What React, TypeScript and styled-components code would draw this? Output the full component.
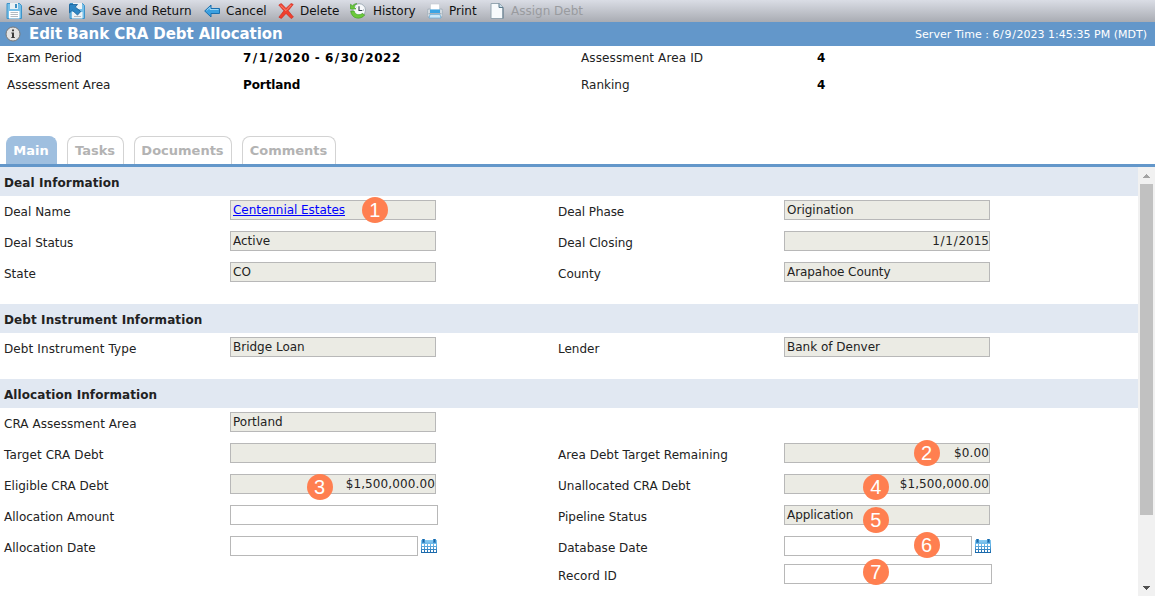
import React from "react";
import styled, { createGlobalStyle, css } from "styled-components";

const GlobalStyle = createGlobalStyle`
  html, body { margin: 0; padding: 0; background: #fff; overflow: hidden; }
  * { box-sizing: border-box; }
  body { font-family: "DejaVu Sans", Verdana, sans-serif; font-size: 12px; color: #222; }
`;

const Page = styled.div`
  display: flex;
  flex-direction: column;
  width: 1155px;
  height: 596px;
  overflow: hidden;
`;

const Toolbar = styled.div`
  display: flex;
  flex: 0 0 22px;
  background: linear-gradient(#dadde5, #a9acb3);
`;

const ToolButton = styled.div<{ $width: number; $gap?: number; $disabled?: boolean }>`
  display: flex;
  align-items: center;
  gap: ${(p) => p.$gap ?? 6}px;
  flex: 0 0 ${(p) => p.$width}px;
  height: 21px;
  padding-left: 6px;
  color: ${(p) => (p.$disabled ? "#999b9f" : "#111")};
  white-space: nowrap;
  svg { flex: 0 0 16px; }
`;

const Text = styled.span<{ $ls?: number }>`
  display: inline-block;
  white-space: nowrap;
  letter-spacing: ${(p) => p.$ls ?? 0}px;
`;

const Slash = styled.span<{ $pad: number }>`
  padding: 0 ${(p) => p.$pad}em;
`;

const TitleBar = styled.div`
  display: flex;
  align-items: center;
  flex: 0 0 24px;
  height: 24px;
  padding: 0 8px 0 5px;
  background: #6397ca;
  color: #fff;
`;

const Title = styled.h1`
  flex: 1;
  margin: 0 0 0 8px;
  padding-top: 1px;
  font-size: 15px;
  line-height: 23px;
`;

const ServerTime = styled.div`
  font-size: 11px;
  white-space: nowrap;
`;

const Summary = styled.div`
  display: grid;
  grid-template-columns: 236px 338px 236px 1fr;
  grid-auto-rows: 27px;
  flex: 0 0 90px;
  padding-left: 7px;
  line-height: 24px;
`;

const SummaryValue = styled.div`
  font-weight: bold;
  color: #000;
`;

const Tabs = styled.div`
  display: flex;
  gap: 10px;
  flex: 0 0 31px;
  padding-left: 6px;
  border-bottom: 3px solid #6397ca;
`;

const Tab = styled.div<{ $width: number; $active?: boolean }>`
  width: ${(p) => p.$width}px;
  height: 28px;
  padding-right: 1px;
  border: 1px solid #d3d3d3;
  border-bottom: 0;
  border-radius: 8px 8px 0 0;
  font-size: 13px;
  font-weight: bold;
  line-height: 27px;
  text-align: center;
  color: #b3b3b3;
  white-space: nowrap;
  ${(p) => p.$active && css`
    background: #9fbfdf;
    border-color: #9fbfdf;
    color: #fff;
  `}
`;

const Body = styled.div`
  display: flex;
  flex: 1;
  min-height: 0;
`;

const Form = styled.div`
  flex: 1;
  min-width: 0;
`;

const Section = styled.section`
  margin-bottom: 15px;
`;

const SectionTitle = styled.h2`
  height: 29px;
  margin: 0;
  padding: 1px 0 0 4px;
  background: #e1e8f2;
  font-size: 12px;
  line-height: 31px;
`;

const Row = styled.div<{ $height?: number }>`
  display: grid;
  grid-template-columns: 226px 328px 226px 1fr;
  height: ${(p) => p.$height ?? 31}px;
  padding: 4px 0 0 4px;
`;

const Label = styled.div`
  padding-top: 1px;
  line-height: 23px;
`;

const FieldCell = styled.div`
  display: flex;
  align-items: flex-start;
  position: relative;
  gap: 3px;
`;

const Input = styled.div<{ $width?: number; $editable?: boolean; $right?: boolean }>`
  width: ${(p) => p.$width ?? 206}px;
  height: 20px;
  padding: 0 ${(p) => (p.$right ? 0 : 2)}px 0 2px;
  border: 1px solid #b8b8b8;
  background: ${(p) => (p.$editable ? "#fff" : "#ebebe4")};
  line-height: 18px;
  text-align: ${(p) => (p.$right ? "right" : "left")};
`;

const Link = styled.a`
  color: #0000ff;
  text-decoration: underline;
`;

const Badge = styled.span<{ $x: number; $y: number }>`
  position: absolute;
  left: ${(p) => p.$x}px;
  top: ${(p) => p.$y}px;
  width: 26px;
  height: 26px;
  border-radius: 50%;
  background: #ff7f50;
  color: #fff;
  font: 20px/26px "Liberation Sans", Arial, sans-serif;
  text-align: center;
`;

const CalendarButton = styled.span`
  display: flex;
  padding-top: 3px;
`;

const ScrollTrack = styled.div`
  display: flex;
  flex-direction: column;
  justify-content: space-between;
  align-items: center;
  flex: 0 0 17px;
  padding: 7px 0 6px;
  background: #f1f1f1;
`;

const ScrollThumb = styled.div`
  width: 13px;
  height: 331px;
  margin: 6px 0 auto;
  background: #c1c1c1;
`;

const SaveIcon = () => (
  <svg width="16" height="16" viewBox="0 0 16 16">
    <path d="M1 .5h12.5l2 2v13H1z" fill="#76bfe8" stroke="#3d93c9" />
    <path d="M4 0h8v6H4z" fill="#e9f0f4" />
    <path d="M9 1h2v4H9z" fill="#3f8fc2" />
    <path d="M3 8h10.5v7.5H3z" fill="#fff" />
    <path d="M4.5 9.5h7.5M4.5 11.5h7.5M4.5 13.5h7.5" stroke="#b3bac0" />
  </svg>
);

const SaveReturnIcon = () => (
  <svg width="16" height="16" viewBox="0 0 16 16">
    <path d="M1 .5h12.5l2 2v13H1z" fill="#76bfe8" stroke="#3d93c9" />
    <path d="M4 0h9v6H4zM3 9h10.5v6.5H3z" fill="#edf3f6" />
    <path d="M5 13.5h7" stroke="#b3bac0" />
    <path d="M.5 1.5h8L6.3 4l5.4 4.5-3.2 3.6L3.3 7.2.5 9.8z" fill="#2e86c4" stroke="#175e96" strokeWidth=".8" />
  </svg>
);

const BackIcon = () => (
  <svg width="16" height="16" viewBox="0 0 16 16">
    <path d="M.7 8L7 2v3.5h8.5v5H7V14z" fill="#3ba0e0" stroke="#1b6fae" strokeLinejoin="round" />
    <path d="M2.6 7.5L6 4.3v2.2h8.5" fill="none" stroke="#9cd7f6" />
  </svg>
);

const DeleteIcon = () => (
  <svg width="16" height="16" viewBox="0 0 16 16">
    <path d="M.8 2L3.3.6 8 5.4 13.2.4l2 1.1-5 6.2 5.2 6.3-2.2 1.6L8 10.4l-4.6 5-2.5-1.2 5-6.4z" fill="#f0402e" stroke="#cf2d22" strokeWidth=".7" />
    <path d="M2.5 2.2L8 7.6 13.3 2" fill="none" stroke="#ff8d77" />
  </svg>
);

const HistoryIcon = () => (
  <svg width="16" height="16" viewBox="0 0 16 16">
    <circle cx="9.2" cy="7" r="6.3" fill="#f7f9fb" stroke="#9aa7b2" strokeWidth=".9" />
    <path d="M9 3.2v4.3h3.3" fill="none" stroke="#33424f" strokeWidth="1.1" />
    <path d="M9 11.2v1M14 7h-1M5.5 3.7l.6.6M12.3 10.3l.7.7" stroke="#77838d" strokeWidth=".8" />
    <path d="M.5 1.2l2 1.5C4 1 5.5.6 7 .7 4.500 1.800 4.200 3 4.200 4.200L6 6H.5zM.7 8h3.500c.5 3.500 5 5 8 2.500l2.600 1.400c-4 5.500-13.500 4-14.100-3.900z" fill="#6cc93b" stroke="#3b9a24" strokeWidth=".6" />
  </svg>
);

const PrintIcon = () => (
  <svg width="16" height="16" viewBox="0 0 16 16">
    <rect x=".4" y="6" width="15.200" height="8" rx="1.5" fill="#d2dae0" stroke="#9ba8b3" strokeWidth=".7" />
    <path d="M3.500 1h9v6h-9z" fill="#fff" stroke="#c5cbd0" strokeWidth=".6" />
    <path d="M3 6.500h10v3.500H3z" fill="#3aa4e4" />
    <path d="M1.500 10.700h13" stroke="#8f9ca7" strokeWidth=".8" />
    <path d="M3 11.500h10l1 3.500H2z" fill="#cce9f9" stroke="#62abd8" strokeWidth=".7" />
  </svg>
);

const PageIcon = () => (
  <svg width="16" height="16" viewBox="0 0 16 16">
    <path d="M2 .5h8.500l3.500 3.500v11.500H2z" fill="#f7fafc" stroke="#94a5b0" />
    <path d="M10 .5v4h4" fill="#c4d9e6" stroke="#5d7b8c" />
    <path d="M14 4.500v11" stroke="#60798a" />
  </svg>
);

const InfoIcon = () => (
  <svg width="16" height="16" viewBox="0 0 16 16">
    <circle cx="8" cy="8" r="7" fill="#e2e2e2" stroke="#777" strokeWidth="1" />
    <path d="M7 3.500h2v1.700H7zM6.300 6.500H9V11h.8v1H6.300v-1H7V7.500h-.7z" fill="#3a3a3a" />
  </svg>
);

const CalendarIcon = () => (
  <svg width="16" height="15" viewBox="0 0 16 15" shapeRendering="crispEdges">
    <defs>
      <linearGradient id="calendarFill" x1="0" y1="0" x2="0" y2="1">
        <stop offset="0" stopColor="#8acbf1" />
        <stop offset=".4" stopColor="#64b3e6" />
        <stop offset="1" stopColor="#1765a8" />
      </linearGradient>
    </defs>
    <path d="M0 1h16v13H0z" fill="url(#calendarFill)" />
    <path d="M1 0h3v4H1zM12 0h3v4h-3z" fill="#3c8cc8" />
    <path d="M2 0h1v3H2zM13 0h1v3h-1z" fill="#1b68a8" />
    <path d="M1 5h2v2H1zm3 0h2v2H4zm3 0h2v2H7zm3 0h2v2h-2zm3 0h2v2h-2zM1 8h2v2H1zm3 0h2v2H4zm3 0h2v2H7zm3 0h2v2h-2zm3 0h2v2h-2zM1 11h2v2H1zm3 0h2v2H4zm3 0h2v2H7zm3 0h2v2h-2zm3 0h2v2h-2z" fill="#fff" />
  </svg>
);

const Arrow = ({ down }: { down?: boolean }) => (
  <svg width="7" height="4" viewBox="0 0 7 4" shapeRendering="crispEdges">
    {down ? <path d="M0 0h7v1H6v1H5v1H4v1H3V3H2V2H1V1H0z" fill="#505050" /> : <path d="M3 0h1v1h1v1h1v1h1v1H0V3h1V2h1V1h1z" fill="#a3a3a3" />}
  </svg>
);

// Dates are set with a little air round each slash.
const DateText = ({ value, pad = 0.06, ls }: { value: string; pad?: number; ls?: number }) => (
  <Text $ls={ls}>
    {value.split("/").map((part, i) => (
      <React.Fragment key={i}>
        {i > 0 && <Slash $pad={pad}>/</Slash>}
        {part}
      </React.Fragment>
    ))}
  </Text>
);

type Tool = { label: string; width: number; icon: React.ReactNode; gap?: number; disabled?: boolean };
const tools: Tool[] = [
  { label: "Save", width: 63, icon: <SaveIcon /> },
  { label: "Save and Return", width: 135, icon: <SaveReturnIcon />, gap: 7 },
  { label: "Cancel", width: 74, icon: <BackIcon /> },
  { label: "Delete", width: 72, icon: <DeleteIcon /> },
  { label: "History", width: 77, icon: <HistoryIcon />, gap: 7 },
  { label: "Print", width: 62, icon: <PrintIcon /> },
  { label: "Assign Debt", width: 110, icon: <PageIcon />, disabled: true },
];

type FieldProps = {
  label: string;
  ls?: number;
  value?: React.ReactNode;
  valueLs?: number;
  editable?: boolean;
  right?: boolean;
  date?: boolean;
  badge?: [number, number, number];
};

const Field = ({ label, ls, value, valueLs, editable, right, date, badge }: FieldProps) => (
  <>
    <Label><Text $ls={ls}>{label}</Text></Label>
    <FieldCell>
      <Input $editable={editable || date} $right={right} $width={date ? 188 : editable ? 208 : 206}>
        {value && <Text $ls={valueLs}>{value}</Text>}
      </Input>
      {date && <CalendarButton><CalendarIcon /></CalendarButton>}
      {badge && <Badge $x={badge[1]} $y={badge[2]}>{badge[0]}</Badge>}
    </FieldCell>
  </>
);

const Blank = () => (
  <>
    <span />
    <span />
  </>
);

export default function App() {
  return (
    <Page>
      <GlobalStyle />
      <Toolbar>
        {tools.map((t) => (
          <ToolButton key={t.label} $width={t.width} $gap={t.gap} $disabled={t.disabled}>
            {t.icon}
            <Text>{t.label}</Text>
          </ToolButton>
        ))}
      </Toolbar>
      <TitleBar>
        <InfoIcon />
        <Title><Text $ls={-0.07}>Edit Bank CRA Debt Allocation</Text></Title>
        <ServerTime><DateText value="Server Time : 6/9/2023 1:45:35 PM (MDT)" ls={0.01} /></ServerTime>
      </TitleBar>
      <Summary>
        <Text>Exam Period</Text>
        <SummaryValue><DateText value="7/1/2020 - 6/30/2022" pad={0.08} ls={0.54} /></SummaryValue>
        <Text $ls={0.12}>Assessment Area ID</Text>
        <SummaryValue>4</SummaryValue>
        <Text>Assessment Area</Text>
        <SummaryValue><Text $ls={-0.1}>Portland</Text></SummaryValue>
        <Text>Ranking</Text>
        <SummaryValue>4</SummaryValue>
      </Summary>
      <Tabs>
        <Tab $width={51} $active>Main</Tab>
        <Tab $width={57}>Tasks</Tab>
        <Tab $width={98}>Documents</Tab>
        <Tab $width={94}>Comments</Tab>
      </Tabs>
      <Body>
        <Form>
          <Section>
            <SectionTitle><Text $ls={0.1}>Deal Information</Text></SectionTitle>
            <Row>
              <Field label="Deal Name" value={<Link>Centennial Estates</Link>} valueLs={-0.04} badge={[1, 131.7, -2.6]} />
              <Field label="Deal Phase" value="Origination" ls={-0.08} />
            </Row>
            <Row>
              <Field label="Deal Status" value="Active" />
              <Field label="Deal Closing" value={<DateText value="1/1/2015" />} right />
            </Row>
            <Row>
              <Field label="State" value="CO" />
              <Field label="County" value="Arapahoe County" valueLs={-0.06} />
            </Row>
          </Section>
          <Section>
            <SectionTitle><Text $ls={0.1}>Debt Instrument Information</Text></SectionTitle>
            <Row>
              <Field label="Debt Instrument Type" value="Bridge Loan" ls={0.12} />
              <Field label="Lender" value="Bank of Denver" />
            </Row>
          </Section>
          <Section>
            <SectionTitle><Text $ls={0.08}>Allocation Information</Text></SectionTitle>
            <Row>
              <Field label="CRA Assessment Area" value="Portland" ls={0.05} />
            </Row>
            <Row>
              <Field label="Target CRA Debt" ls={0.1} />
              <Field label="Area Debt Target Remaining" value="$0.00" ls={0.04} valueLs={0.12} right badge={[2, 129.6, -2.8]} />
            </Row>
            <Row>
              <Field label="Eligible CRA Debt" value="$1,500,000.00" valueLs={0.12} right badge={[3, 76.5, 0.4]} />
              <Field label="Unallocated CRA Debt" value="$1,500,000.00" valueLs={0.12} right badge={[4, 78.7, 0.4]} />
            </Row>
            <Row>
              <Field label="Allocation Amount" editable />
              <Field label="Pipeline Status" value="Application" badge={[5, 78.7, 1.6]} valueLs={-0.08} />
            </Row>
            <Row $height={28}>
              <Field label="Allocation Date" date />
              <Field label="Database Date" date badge={[6, 129.6, -3.6]} />
            </Row>
            <Row>
              <Blank />
              <Field label="Record ID" ls={0.1} editable badge={[7, 78.7, -4.6]} />
            </Row>
          </Section>
        </Form>
        <ScrollTrack>
          <Arrow />
          <ScrollThumb />
          <Arrow down />
        </ScrollTrack>
      </Body>
    </Page>
  );
}
